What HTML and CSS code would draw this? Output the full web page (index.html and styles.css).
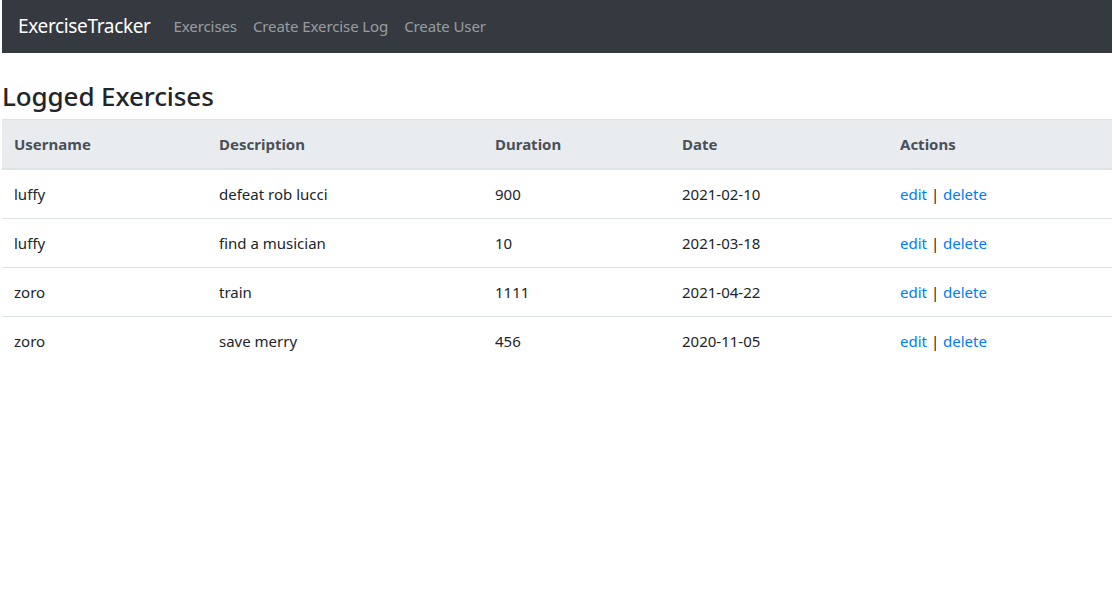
FILE: index.html
```html
<!DOCTYPE html>
<html lang="en">
<head>
<meta charset="utf-8">
<title>ExerciseTracker</title>
<link rel="stylesheet" href="styles.css">
</head>
<body>
<div class="container">
  <nav class="navbar">
    <a class="brand" href="#">ExerciseTracker</a>
    <ul class="nav">
      <li><a class="nav-link" href="#">Exercises</a></li>
      <li><a class="nav-link" href="#">Create Exercise Log</a></li>
      <li><a class="nav-link" href="#">Create User</a></li>
    </ul>
  </nav>
  <div class="spacer"></div>
  <h3 class="title">Logged Exercises</h3>
  <table class="table">
    <colgroup>
      <col class="c1"><col class="c2"><col class="c3"><col class="c4"><col class="c5">
    </colgroup>
    <thead>
      <tr><th>Username</th><th>Description</th><th>Duration</th><th>Date</th><th>Actions</th></tr>
    </thead>
    <tbody>
      <tr><td>luffy</td><td>defeat rob lucci</td><td>900</td><td>2021-02-10</td><td><a href="#">edit</a> | <a href="#">delete</a></td></tr>
      <tr><td>luffy</td><td>find a musician</td><td>10</td><td>2021-03-18</td><td><a href="#">edit</a> | <a href="#">delete</a></td></tr>
      <tr><td>zoro</td><td>train</td><td>1111</td><td>2021-04-22</td><td><a href="#">edit</a> | <a href="#">delete</a></td></tr>
      <tr><td>zoro</td><td>save merry</td><td>456</td><td>2020-11-05</td><td><a href="#">edit</a> | <a href="#">delete</a></td></tr>
    </tbody>
  </table>
</div>
</body>
</html>
```

FILE: styles.css
```css
* { box-sizing: border-box; }
html, body { margin: 0; padding: 0; }
body {
  font-family: "Noto Sans", "Open Sans", sans-serif;
  font-size: 16px;
  line-height: 1.5;
  color: #212529;
  background: #fff;
}
.container {
  margin: 0 1px 0 2px;
}
.navbar {
  background: #343a40;
  display: flex;
  align-items: center;
  height: 53px;
  padding: 0 16px;
}
.brand {
  color: #fff;
  font-size: 19px;
  text-decoration: none;
  margin-right: 15px;
  letter-spacing: -0.35px;
}
.nav {
  display: flex;
  list-style: none;
  margin: 0;
  padding: 0;
}
.nav-link {
  display: block;
  padding: 0 8px;
  color: rgba(255,255,255,.5);
  text-decoration: none;
  font-size: 15px;
  letter-spacing: -0.1px;
}
.spacer { height: 24px; }
.title {
  margin: 0 0 8px 0;
  font-size: 26px;
  font-weight: 500;
  line-height: 38px;
  height: 33.6px;
  letter-spacing: -0.1px;
}
.table {
  width: 100%;
  border-collapse: collapse;
  table-layout: fixed;
  font-size: 15px;
}
.c1 { width: 205px; }
.c2 { width: 276px; }
.c3 { width: 187px; }
.c4 { width: 218px; }
.c5 { width: 224px; }
.table th, .table td {
  padding: 12px;
  text-align: left;
  line-height: 24px;
  vertical-align: top;
  border-top: 1px solid #dee2e6;
}
.table thead th {
  background: #e9ecef;
  color: #495057;
  font-weight: 700;
  border-bottom: 2px solid #dee2e6;
}
.table a {
  color: #007bff;
  text-decoration: none;
}
.sep { margin: 0 1px; }
```
